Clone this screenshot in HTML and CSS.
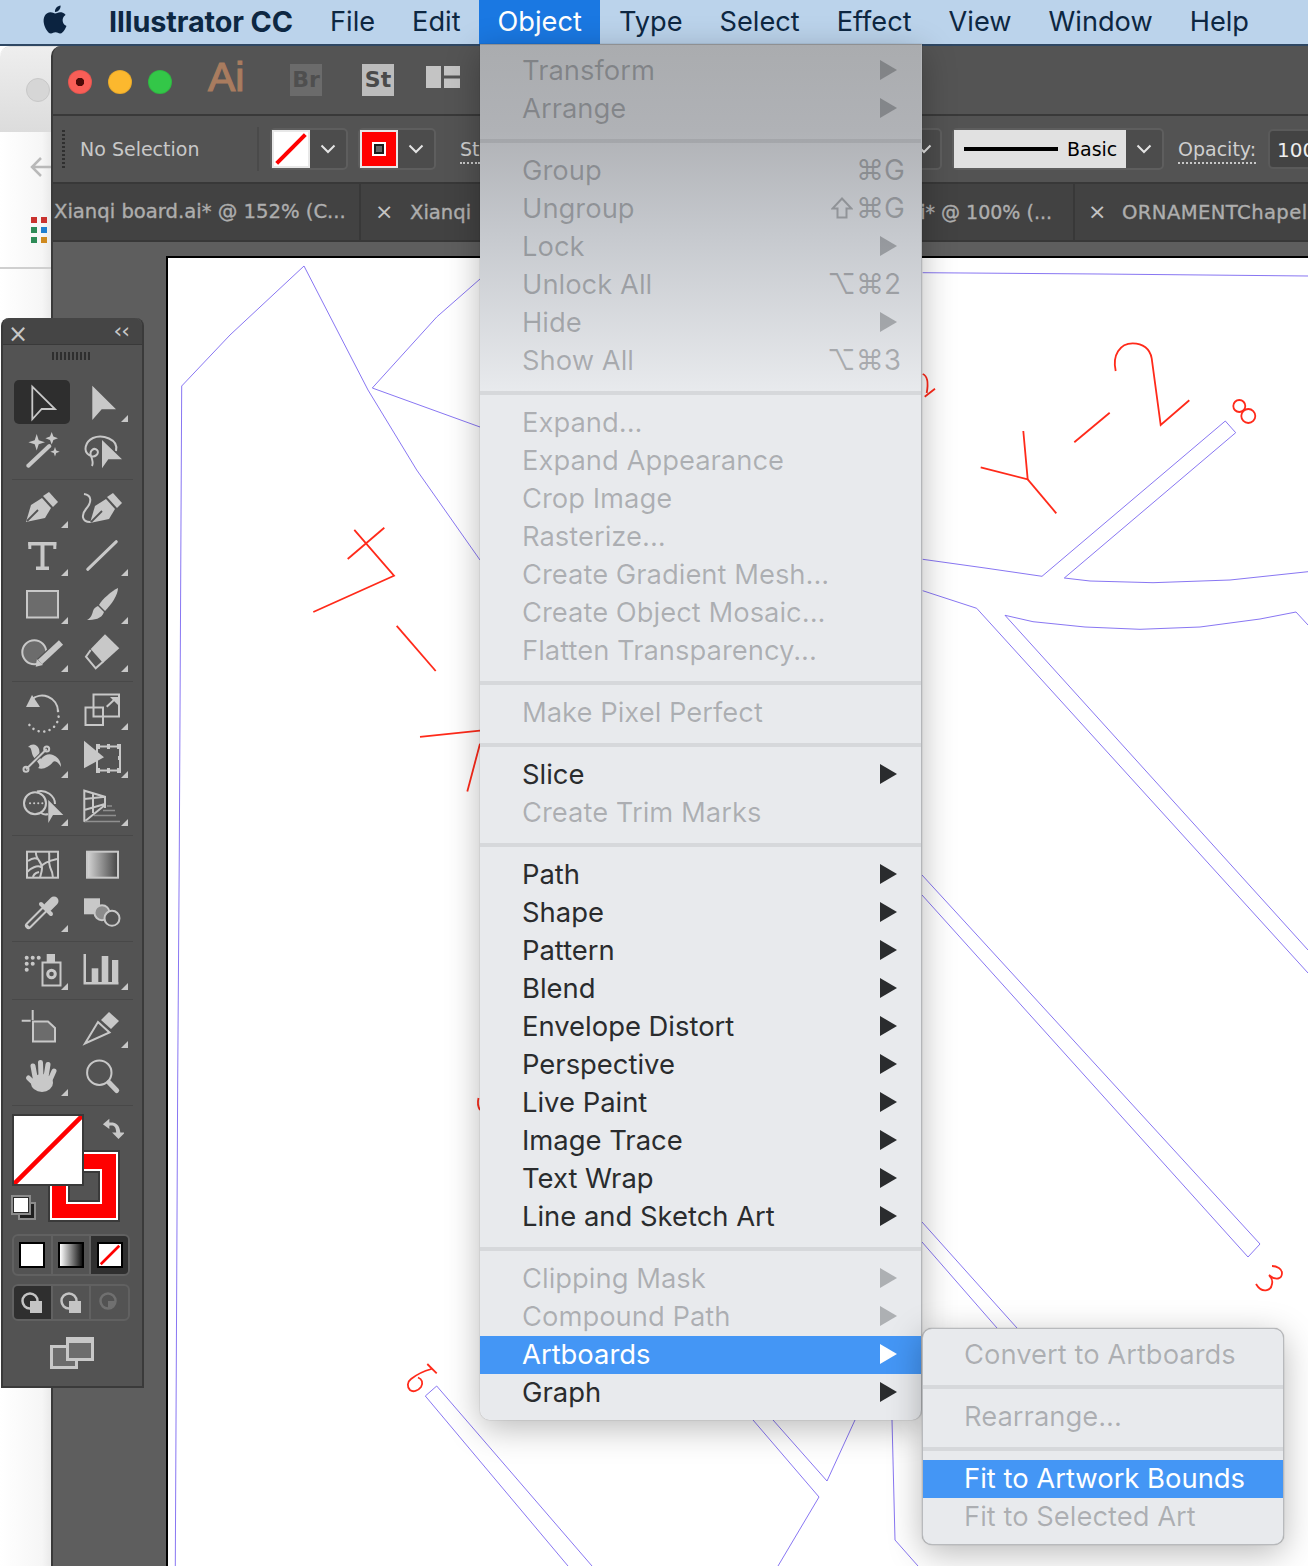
FILE: index.html
```html
<!DOCTYPE html>
<html lang="en">
<head>
<meta charset="utf-8">
<title>Illustrator CC - Object menu</title>
<link rel="stylesheet" href="styles.css">
</head>
<body>
<svg class="defs" aria-hidden="true"><symbol id="chev" viewBox="0 0 16 10"><polyline points="1.5,1.5 8,8 14.5,1.5" fill="none" stroke="#e4e4e4" stroke-width="2"/></symbol><symbol id="slash" viewBox="0 0 38 38"><rect width="38" height="38" fill="#fff"/><line x1="3" y1="35" x2="35" y2="3" stroke="#f00" stroke-width="4.5"/></symbol></svg>
<div class="desktop">

  <header class="menubar">
    <svg class="apple" viewBox="0 0 24 24"><path d="M12.152 6.896c-.948 0-2.415-1.078-3.96-1.04-2.04.027-3.91 1.183-4.961 3.014-2.117 3.675-.546 9.103 1.519 12.09 1.013 1.454 2.208 3.09 3.792 3.039 1.52-.065 2.09-.987 3.935-.987 1.831 0 2.35.987 3.96.948 1.637-.026 2.676-1.48 3.676-2.948 1.156-1.688 1.636-3.325 1.662-3.415-.039-.013-3.182-1.221-3.22-4.857-.026-3.04 2.48-4.494 2.597-4.559-1.429-2.09-3.623-2.324-4.39-2.376-2-.156-3.675 1.09-4.61 1.09zM15.53 3.83c.843-1.012 1.4-2.427 1.245-3.83-1.207.052-2.662.805-3.532 1.818-.78.896-1.454 2.338-1.273 3.714 1.338.104 2.715-.688 3.559-1.701"/></svg>
    <span class="mb-item mb-app">Illustrator CC</span>
    <span class="mb-item">File</span>
    <span class="mb-item">Edit</span>
    <span class="mb-item mb-active">Object</span>
    <span class="mb-item">Type</span>
    <span class="mb-item">Select</span>
    <span class="mb-item">Effect</span>
    <span class="mb-item">View</span>
    <span class="mb-item">Window</span>
    <span class="mb-item">Help</span>
  </header>

  <aside class="browser">
    <div class="browser-head"><span class="browser-dot"></span></div>
    <svg class="browser-back" viewBox="0 0 24 24"><path d="M22 12H3M12 3l-9 9 9 9" fill="none" stroke="#b9b9b9" stroke-width="2.5"/></svg>
    <div class="browser-apps">
      <i class="app-red"></i><i class="app-red"></i>
      <i class="app-green"></i><i class="app-blue"></i>
      <i class="app-green"></i><i class="app-orange"></i>
    </div>
    <div class="browser-rule"></div>
  </aside>

  <main class="window">
    <div class="titlebar">
      <span class="light light-red"></span>
      <span class="light light-yellow"></span>
      <span class="light light-green"></span>
      <span class="ai-logo">Ai</span>
      <span class="app-box box-br">Br</span>
      <span class="app-box box-st">St</span>
      <svg class="layout-icon" viewBox="0 0 34 22"><path d="M0 0h15v22H0zM18 0h16v9.5H18zM18 12.5h16V22H18z" fill="#c4c4c4"/></svg>
    </div>

    <div class="controlbar">
      <span class="grip"></span>
      <span class="no-sel">No Selection</span>
      <span class="ctl-div"></span>
      <div class="combo combo-fill">
        <svg class="swatch"><use href="#slash"/></svg>
        <span class="combo-chev"><svg class="chev"><use href="#chev"/></svg></span>
      </div>
      <div class="combo combo-stroke">
        <span class="swatch-stroke"><span class="swatch-stroke-in"></span></span>
        <span class="combo-chev"><svg class="chev"><use href="#chev"/></svg></span>
      </div>
      <span class="ctl-st"><span class="dotted">St</span></span>
      <div class="combo combo-ghost"><span class="combo-chev"><svg class="chev"><use href="#chev"/></svg></span></div>
      <div class="combo combo-style">
        <span class="style-swatch"><span class="style-line"></span><span class="style-name">Basic</span></span>
        <span class="combo-chev"><svg class="chev"><use href="#chev"/></svg></span>
      </div>
      <span class="opacity-label"><span class="dotted">Opacity:</span></span>
      <span class="opacity-input">100</span>
    </div>

    <div class="tabs">
      <div class="tab tab-1">Xianqi board.ai* @ 152% (C...</div>
      <div class="tab tab-2"><span class="tab-x">×</span>Xianqi</div>
      <div class="tab tab-3">i* @ 100% (...</div>
      <div class="tab tab-4"><span class="tab-x">×</span>ORNAMENTChapel</div>
    </div>

    <div class="canvas">
      <div class="artboard">
        <svg class="art" viewBox="168 258 1140 1308" width="1140" height="1308">
          <g class="art-blue">
            <polyline points="175.3,1566 177.7,1080 179.3,850 181.7,386 230,335 304,266 368,390 416.7,470 480,560"/>
            <polyline points="480,279 436.7,317 372.3,388 480,427"/>
            <polyline points="922.7,272.7 1100,274 1308,276"/>
            <polyline points="922.7,559.3 985,568 1042,576.3 1225.3,421 1235.7,432.7 1064.3,578 1090,581 1153,582.7 1230,580 1308,571.7"/>
            <polyline points="922.7,590.7 976.7,608.3 1308,973"/>
            <polyline points="1308,950 1005,615.3 1033,621.7 1085,627 1140,629.3 1200,627 1260,619 1296,612 1308,625"/>
            <polyline points="922,875 1260,1244 1248,1257 922,895"/>
            <polyline points="922,1222 1017,1328"/>
            <polyline points="922,1242 997,1328"/>
            <polyline points="592,1566 436.7,1386 425.3,1396 568,1566"/>
            <polyline points="753,1420 819,1497 778,1566"/>
            <polyline points="773,1420 827,1481 855,1420"/>
            <polyline points="892,1420 895,1540 918,1566"/>
          </g>
          <g class="art-red">
            <polyline points="354.3,529.8 394,575.7 313.3,612"/>
            <line x1="384.3" y1="527.8" x2="347.7" y2="559"/>
            <line x1="396.7" y1="625.8" x2="435.7" y2="671"/>
            <line x1="420" y1="736.8" x2="480" y2="730.7"/>
            <line x1="480" y1="743.7" x2="467.3" y2="791.5"/>
            <path d="M478.5 1098c-1 4-1 8 1.500 12"/>
            <path d="M922.700 374c5 2 6 8 4 19M924.700 396.700l10.300-8"/>
            <polyline points="1023.300,431 1027.700,479.300 980.700,467.300"/>
            <line x1="1027.700" y1="479.300" x2="1056.300" y2="513.300"/>
            <line x1="1074.300" y1="442.300" x2="1109.700" y2="412.700"/>
            <path d="M1115.700 371C1112 355 1120 343.300 1132.700 343.300 1143 343.300 1150 349 1151.700 358.300L1160.700 425 1189.300 400.300"/>
            <circle cx="1239.300" cy="406" r="6"/>
            <circle cx="1248.300" cy="416" r="7"/>
            <path d="M1256 1284C1262 1294 1271 1291 1272 1284 1273 1280 1271 1277 1269 1275 1276 1281 1282 1279 1282 1273 1282 1269 1277 1266 1272 1266"/>
            <path d="M427.300 1364l9.400 9.400M431.500 1369C424 1371 416 1375 411 1379 407 1382 407 1387 410 1390 413 1392.500 418 1391 421 1387 423.500 1383 422 1379 418 1377.500"/>
          </g>
        </svg>
      </div>
    </div>
  </main>

  <aside class="toolbox">
    <div class="tb-head"><span class="tb-x">×</span><span class="tb-collapse">‹‹</span></div>
    <div class="tb-grip"></div>

    <div class="tb-sec">
      <div class="tool sel"><svg viewBox="0 0 60 48"><path class="o" d="M20.300 7.700L43 30H29.700L20.300 40.300z"/></svg></div>
      <div class="tool more"><svg viewBox="0 0 60 48"><path d="M20.300 6.700L44 30.300H29.700L20.300 41z"/></svg></div>
      <div class="tool"><svg viewBox="0 0 60 48"><line class="l4" x1="16.300" y1="38.700" x2="37.300" y2="19"/><path d="M24.700 7l2 6.300 6.300 2-6.300 2-2 6.300-2-6.300-6.300-2 6.300-2zM39.700 5l1.700 4.600 4.600 1.700-4.600 1.700-1.700 4.600-1.700-4.600-4.600-1.700 4.600-1.700zM43 20l1.200 3.500 3.500 1.200-3.500 1.200-1.200 3.500-1.200-3.500-3.500-1.200 3.500-1.200z"/></svg></div>
      <div class="tool"><svg viewBox="0 0 60 48"><path class="s" d="M44 24C47 12 30 7 21 11 13 15 11 24 17 28 23 32 28 26 25 23 22 20 17 24 19 29 21 34 21 37 20 39"/><path d="M30 13L50 32.300H36.300L30 41.300z"/></svg></div>
    </div>
    <div class="tb-rule"></div>
    <div class="tb-sec">
      <div class="tool more"><svg viewBox="0 0 60 48"><path d="M14 37L19 20 30 13 39 23 33 33z"/><path d="M31 11L37 7 46 17 41 22z"/><line x1="15" y1="36" x2="26" y2="25" stroke="#535353" stroke-width="1.800"/></svg></div>
      <div class="tool"><svg viewBox="0 0 60 48"><path d="M18 38L23 21 34 14 43 24 37 34z"/><path d="M35 12L41 8 50 18 45 23z"/><line x1="19" y1="37" x2="30" y2="26" stroke="#535353" stroke-width="1.800"/><path class="s" d="M12 9C20 10 20 17 14 24 9 30 10 37 18 37"/></svg></div>
      <div class="tool more"><svg viewBox="0 0 60 48"><rect x="16.300" y="9" width="28" height="3.500"/><rect x="16.300" y="9" width="3" height="7"/><rect x="41.300" y="9" width="3" height="7"/><rect x="28.500" y="10" width="4" height="26"/><rect x="24" y="33.500" width="13" height="3.500"/></svg></div>
      <div class="tool more"><svg viewBox="0 0 60 48"><line class="l3" x1="15.700" y1="36.300" x2="44.300" y2="8.700"/></svg></div>
      <div class="tool more"><svg viewBox="0 0 60 48"><rect class="g" x="15" y="10" width="31" height="26.500"/></svg></div>
      <div class="tool more"><svg viewBox="0 0 60 48"><path d="M46 7C40 10 30 18 27 24L33 30C39 24 46 14 46 7z"/><path d="M26 25L32 31C30 38 22 39 15 39 19 37 20 34 21 30 22 27 24 26 26 25z"/></svg></div>
      <div class="tool more"><svg viewBox="0 0 60 48"><circle class="g" cx="22.300" cy="23.300" r="12"/><line x1="27" y1="35" x2="50" y2="13.500" stroke="#535353" stroke-width="10"/><line class="l6" x1="28" y1="33" x2="49" y2="13.500"/><path d="M23.700 37.700L24.800 30 31 36z"/></svg></div>
      <div class="tool more"><svg viewBox="0 0 60 48"><path d="M33 5.300L47.300 19.300 31 34 18.700 20z"/><path class="s" d="M18.700 21L14 27.700 23.700 39.300 31 32.700"/></svg></div>
    </div>
    <div class="tb-rule"></div>
    <div class="tb-sec">
      <div class="tool more"><svg viewBox="0 0 60 48"><path class="s" d="M19 13A16 16 0 0 1 46 24"/><path class="dots" d="M46 24A16 16 0 0 1 15 33"/><path d="M20 8L14 20H28z"/></svg></div>
      <div class="tool more"><svg viewBox="0 0 60 48"><rect class="s" x="21.500" y="7.500" width="25.500" height="22"/><rect class="s" x="13.500" y="20.500" width="17.500" height="17.500"/><line class="l2" x1="34.700" y1="19.700" x2="43" y2="12"/><path d="M38 10h8v8z"/></svg></div>
      <div class="tool more"><svg viewBox="0 0 60 48"><path d="M16 12C20 8 25 9 27 14 28 18 27 22 29 24 32 20 37 18 41 20 46 22 49 26 49 32 46 27 43 25 41 27 37 32 31 35 26 33 30 30 24 26 21 21 19 17 20 12 16 12z"/><line x1="14" y1="34.300" x2="34.700" y2="14" stroke="#535353" stroke-width="4"/><line class="l2" x1="14" y1="34.300" x2="34.700" y2="14"/><circle class="s" cx="14" cy="34.300" r="2.500"/><circle class="s" cx="34.700" cy="14" r="2.500"/></svg></div>
      <div class="tool more"><svg viewBox="0 0 60 48"><rect class="s" x="25" y="11.500" width="23" height="24"/><path d="M24 9h4v5h-4zM45 9h4v5h-4zM24 33h4v5h-4zM45 33h4v5h-4zM35 9h3v5h-3zM35 33h3v5h-3zM46 21h3v4h-3z"/><path d="M12 5.700L32 22.300 12 33.300z"/></svg></div>
      <div class="tool more"><svg viewBox="0 0 60 48"><circle class="s" cx="23" cy="20.300" r="11"/><path class="s" d="M25 8.500C34 6 43 13 43 21M29 30C32 32 34 32 36 31"/><path class="dots2" d="M18 20.300H32"/><path d="M36.300 17L51.300 32H41L36.300 40z"/></svg></div>
      <div class="tool more"><svg viewBox="0 0 60 48"><path class="s" d="M12.300 38.700V7.700L33 13.700V25M12.300 38.700L33 22M12.300 16L33 13.700M12.300 27L33 21M21 10.500V30"/><path class="fade" d="M35 23h5M31 27.500h12M22 32.500h22M13 38.500h35"/></svg></div>
    </div>
    <div class="tb-rule"></div>
    <div class="tb-sec">
      <div class="tool"><svg viewBox="0 0 60 48"><rect class="s" x="15" y="10.700" width="31" height="26"/><path class="s" d="M24 11C23 18 30 20 30 27 30 32 28 35 28 37M45 18C36 20 31 22 29 26 25 24 19 27 15 31M37 11C38 18 36 20 38 26 40 30 41 34 41 37M16 20C20 17 24 17 26 18M21 37C21 34 23 32 27 31"/></svg></div>
      <div class="tool"><svg viewBox="0 0 60 48"><defs><linearGradient id="gradTool"><stop offset="0" stop-color="#d6d6d6"/><stop offset="1" stop-color="#444"/></linearGradient></defs><rect x="15" y="10.700" width="31" height="26" fill="url(#gradTool)" stroke="#c8c8c8" stroke-width="2"/></svg></div>
      <div class="tool more"><svg viewBox="0 0 60 48"><line class="l8" x1="36" y1="18" x2="42" y2="12"/><line class="l4" x1="29" y1="15" x2="39" y2="25"/><line class="l7" x1="16.500" y1="36.500" x2="32" y2="21"/><line x1="16.500" y1="36.500" x2="32" y2="21" stroke="#535353" stroke-width="3"/></svg></div>
      <div class="tool"><svg viewBox="0 0 60 48"><rect x="12" y="9.300" width="16" height="16"/><circle cx="30" cy="23.700" r="7.500" fill="#8c8c8c" stroke="#c8c8c8" stroke-width="2"/><circle cx="40" cy="29.300" r="7.500" fill="#535353" stroke="#c8c8c8" stroke-width="2"/></svg></div>
    </div>
    <div class="tb-rule"></div>
    <div class="tb-sec">
      <div class="tool more"><svg viewBox="0 0 60 48"><circle cx="14.700" cy="10.700" r="2"/><circle cx="20.700" cy="10.700" r="2"/><circle cx="26.700" cy="10.700" r="2"/><circle cx="14.700" cy="16.700" r="2"/><circle cx="20.700" cy="16.700" r="2"/><circle cx="14.700" cy="22.700" r="2"/><rect x="34.700" y="7" width="8.300" height="8"/><rect class="s" x="30.500" y="15.500" width="18" height="23"/><circle class="s3" cx="39.500" cy="27" r="3.800"/></svg></div>
      <div class="tool more"><svg viewBox="0 0 60 48"><path d="M11.500 7h2.500v28h32.500v2.500h-35z"/><rect x="19.700" y="21.300" width="6.600" height="14"/><rect x="29.700" y="9" width="6.600" height="26"/><rect x="40" y="13" width="6.300" height="22"/></svg></div>
    </div>
    <div class="tb-rule"></div>
    <div class="tb-sec">
      <div class="tool"><svg viewBox="0 0 60 48"><path class="s" d="M20.700 5V15M9.700 15.700H18.700"/><path class="g" d="M21 16.500H36L43 23V36.500H21z"/></svg></div>
      <div class="tool more"><svg viewBox="0 0 60 48"><path class="s" d="M13 38.500L26 17 37.500 27.500z"/><path d="M29 15L37 7 47 16 39 24z"/></svg></div>
      <div class="tool more"><svg viewBox="0 0 60 48"><ellipse cx="30" cy="30" rx="11" ry="9"/><path class="l5" d="M25 33L16.500 25M23 24L21 13M29 24L28.500 9.500M34 24L36 11.500M38 27L42 18"/></svg></div>
      <div class="tool"><svg viewBox="0 0 60 48"><circle class="s" cx="27.300" cy="19.700" r="12.200"/><line class="l5" x1="37" y1="29.500" x2="44.700" y2="37.500"/></svg></div>
    </div>
    <div class="tb-rule"></div>

    <div class="tb-colors">
      <svg class="tb-fill" viewBox="0 0 68 68"><rect width="68" height="68" fill="#fff"/><line x1="0" y1="68" x2="68" y2="0" stroke="#f00" stroke-width="4.500"/></svg>
      <span class="tb-stroke"><span class="tb-stroke-in"></span></span>
      <svg class="tb-swap" viewBox="0 0 24 24"><path d="M9 2L2 8l7 5V9.500C14 9 16 10 16.500 17H21C20 8 16 5.500 9 6z M12 17h14l-7 7z" fill="#c8c8c8" transform="translate(-1,0)"/></svg>
      <span class="tb-def-back"></span><span class="tb-def-front"></span>
    </div>

    <div class="tb-mode tb-mode-1">
      <span class="mode"><span class="mode-swatch ms-white"></span></span>
      <span class="mode"><span class="mode-swatch ms-grad"></span></span>
      <span class="mode mode-on"><svg class="mode-swatch"><use href="#slash" width="22" height="22"/></svg></span>
    </div>
    <div class="tb-mode tb-mode-2">
      <span class="mode mode-on"><svg viewBox="0 0 24 24" class="mode-ic"><circle cx="10" cy="10" r="7.500" fill="none" stroke="#c4c4c4" stroke-width="2.500"/><rect x="10" y="10" width="12" height="12" fill="#c4c4c4"/></svg></span>
      <span class="mode"><svg viewBox="0 0 24 24" class="mode-ic"><circle cx="10" cy="10" r="7.500" fill="none" stroke="#c4c4c4" stroke-width="2.500"/><rect x="10" y="10" width="12" height="12" fill="#c4c4c4"/></svg></span>
      <span class="mode"><svg viewBox="0 0 24 24" class="mode-ic"><circle cx="10" cy="10" r="7.500" fill="none" stroke="#707070" stroke-width="2.500"/><path d="M10 10h7.500A7.500 7.500 0 0 1 10 17.500z" fill="#707070"/></svg></span>
    </div>
    <svg class="tb-screen" viewBox="0 0 44 32"><rect x="1.500" y="9.500" width="25" height="21" fill="#6c6c6c" stroke="#c8c8c8" stroke-width="3"/><rect x="17.500" y="1.500" width="25" height="21" fill="#6c6c6c" stroke="#c8c8c8" stroke-width="3"/><rect x="16" y="0" width="28" height="6" fill="#c8c8c8"/></svg>
  </aside>

  <nav class="menu menu-object">
    <div class="m dis"><span>Transform</span><i class="arrow"></i></div>
    <div class="m dis"><span>Arrange</span><i class="arrow"></i></div>
    <div class="m-sep"></div>
    <div class="m dis"><span>Group</span><b class="sc sc-g">⌘G</b></div>
    <div class="m dis"><span>Ungroup</span><b class="sc sc-g"><svg class="shift" viewBox="0 0 22 22"><path d="M11 1.500L20.500 11.500H15.500V20.500H6.500V11.500H1.500z"/></svg>⌘G</b></div>
    <div class="m dis"><span>Lock</span><i class="arrow"></i></div>
    <div class="m dis"><span>Unlock All</span><b class="sc">⌥⌘2</b></div>
    <div class="m dis"><span>Hide</span><i class="arrow"></i></div>
    <div class="m dis"><span>Show All</span><b class="sc">⌥⌘3</b></div>
    <div class="m-sep"></div>
    <div class="m dis"><span>Expand...</span></div>
    <div class="m dis"><span>Expand Appearance</span></div>
    <div class="m dis"><span>Crop Image</span></div>
    <div class="m dis"><span>Rasterize...</span></div>
    <div class="m dis"><span>Create Gradient Mesh...</span></div>
    <div class="m dis"><span>Create Object Mosaic...</span></div>
    <div class="m dis"><span>Flatten Transparency...</span></div>
    <div class="m-sep"></div>
    <div class="m dis"><span>Make Pixel Perfect</span></div>
    <div class="m-sep"></div>
    <div class="m"><span>Slice</span><i class="arrow"></i></div>
    <div class="m dis"><span>Create Trim Marks</span></div>
    <div class="m-sep"></div>
    <div class="m"><span>Path</span><i class="arrow"></i></div>
    <div class="m"><span>Shape</span><i class="arrow"></i></div>
    <div class="m"><span>Pattern</span><i class="arrow"></i></div>
    <div class="m"><span>Blend</span><i class="arrow"></i></div>
    <div class="m"><span>Envelope Distort</span><i class="arrow"></i></div>
    <div class="m"><span>Perspective</span><i class="arrow"></i></div>
    <div class="m"><span>Live Paint</span><i class="arrow"></i></div>
    <div class="m"><span>Image Trace</span><i class="arrow"></i></div>
    <div class="m"><span>Text Wrap</span><i class="arrow"></i></div>
    <div class="m"><span>Line and Sketch Art</span><i class="arrow"></i></div>
    <div class="m-sep"></div>
    <div class="m dis"><span>Clipping Mask</span><i class="arrow"></i></div>
    <div class="m dis"><span>Compound Path</span><i class="arrow"></i></div>
    <div class="m hi"><span>Artboards</span><i class="arrow"></i></div>
    <div class="m"><span>Graph</span><i class="arrow"></i></div>
  </nav>

  <nav class="menu menu-sub">
    <div class="m dis"><span>Convert to Artboards</span></div>
    <div class="m-sep"></div>
    <div class="m dis"><span>Rearrange...</span></div>
    <div class="m-sep"></div>
    <div class="m hi"><span>Fit to Artwork Bounds</span></div>
    <div class="m dis"><span>Fit to Selected Art</span></div>
  </nav>
</div>
</body>
</html>
```

FILE: styles.css
```css
* { box-sizing: border-box; }
html, body { margin: 0; padding: 0; }
body { background: #fff; font-family: "Inter", "Liberation Sans", sans-serif; }
.defs { display: none; }
.desktop { position: relative; width: 1308px; height: 1566px; overflow: hidden; background: #fff; }

/* menu bar */
.menubar { position: absolute; top: 0; left: 0; right: 0; height: 46px; z-index: 5; display: flex; align-items: stretch; padding-left: 41px; background: #bbd3eb; border-bottom: 2px solid #2e4763; color: #0d2742; font-size: 27.200px; }
.apple { width: 28px; height: 33px; margin: 3px 0 0; fill: #0b2340; flex: none; }
.mb-item { display: flex; align-items: center; padding: 0 18.500px; line-height: 44px; white-space: nowrap; flex: none; }
.mb-app { font-weight: 700; font-size: 28.800px; margin-left: 22px; padding-left: 18px; letter-spacing: -.1px; }
.mb-active { background: #1a78e2; color: #fff; }

/* browser behind */
.browser { position: absolute; left: 0; top: 46px; width: 70px; height: 1520px; background: linear-gradient(90deg, #fff 0, #f6f6f6 60%, #d0d0d0 100%); border-top-left-radius: 10px; border-top: 1px solid #ddd; }
.browser-head { height: 85px; background: linear-gradient(#eee, #dcdcdc); display: flex; align-items: center; border-top-left-radius: 10px; padding-left: 26px; }
.browser-dot { width: 24px; height: 24px; border-radius: 50%; background: #d6d6d6; border: 1px solid #c8c8c8; }
.browser-back { display: block; width: 24px; height: 24px; margin: 23px 0 0 29px; }
.browser-apps { display: grid; grid-template-columns: 6px 6px; gap: 4px; margin: 38px 0 0 31px; }
.browser-apps i { display: block; width: 6px; height: 6px; }
.app-red { background: #c9322e; }
.app-green { background: #2e8b57; }
.app-blue { background: #1e7fd0; }
.app-orange { background: #cf8a1f; }
.browser-rule { height: 2px; margin-top: 24px; background: #cfcfcf; }

/* app window */
.window { position: absolute; left: 51px; top: 46px; width: 1280px; height: 1520px; display: flex; flex-direction: column; background: #5e5e5e; border-left: 2px solid #3a3a3a; border-top-left-radius: 10px; overflow: hidden; }
.titlebar { height: 70px; flex: none; display: flex; align-items: center; padding-left: 15px; background: #545454; border-bottom: 2px solid #393939; }
.light { width: 24px; height: 24px; border-radius: 50%; margin: 3px 16px 0 0; border: 1px solid rgba(0,0,0,.08); flex: none; }
.light-red { background: radial-gradient(circle, #4d0a08 0 4px, #f95e57 4.500px); }
.light-yellow { background: #fcb82e; }
.light-green { background: #33c748; margin-right: 0; }
.ai-logo { margin: -6px 0 0 36px; font: 400 41px/1 "Liberation Sans", sans-serif; color: #a97c5f; -webkit-text-stroke: 1.200px #a97c5f; width: 36px; }
.app-box { width: 32px; height: 32px; display: flex; align-items: center; justify-content: center; font: 700 22px/1 "DejaVu Sans", sans-serif; flex: none; }
.box-br { margin-left: 46px; background: #6b6b6b; color: #4f4f4f; }
.box-st { margin-left: 40px; background: #bcbcbc; color: #4a4a4a; }
.layout-icon { width: 34px; height: 22px; margin-left: 32px; margin-top: -6px; flex: none; }

.controlbar { height: 68px; flex: none; display: flex; align-items: center; padding-left: 9px; background: #535353; border-bottom: 2px solid #383838; color: #cfcfcf; font: 400 19px/1 "DejaVu Sans", sans-serif; white-space: nowrap; }
.controlbar > * { flex: none; }
.grip { width: 3px; height: 38px; background: repeating-linear-gradient(#2f2f2f 0 2px, transparent 2px 4px); }
.no-sel { width: 176px; margin-left: 15px; color: #c8c8c8; }
.ctl-div { width: 2px; height: 44px; background: #4a4a4a; margin-left: 1px; }
.combo { display: flex; height: 42px; border: 2px solid #5e5e5e; border-radius: 5px; background: #4c4c4c; flex: none; }
.combo-fill { width: 78px; margin-left: 11px; }
.combo-stroke { width: 78px; margin-left: 10px; }
.swatch { width: 38px; height: 38px; display: block; border: 2px solid #e8e8e8; flex: none; }
.combo-chev { flex: 1; display: flex; align-items: center; justify-content: center; }
.chev { width: 16px; height: 10px; }
.swatch-stroke { width: 38px; height: 38px; display: flex; align-items: center; justify-content: center; background: #f00; border: 2px solid #e8e8e8; flex: none; }
.swatch-stroke-in { width: 10px; height: 10px; background: #666; border: 2px solid #1d1d1d; outline: 2px solid #fff; outline-offset: 0; }
.ctl-st { width: 40px; margin-left: 24px; }
.dotted { border-bottom: 2px dotted #c8c8c8; padding-bottom: 2px; }
.combo-ghost { width: 37px; margin-left: 405px; }
.combo-style { width: 212px; margin-left: 10px; }
.style-swatch { width: 172px; display: flex; align-items: center; background: #e1e1e1; color: #000; padding-left: 10px; flex: none; }
.style-line { width: 94px; height: 4px; background: #000; margin-right: 9px; }
.style-name { font-size: 19px; }
.opacity-label { margin-left: 14px; width: 78px; }
.opacity-input { margin-left: 12px; width: 80px; height: 40px; padding: 9px 0 0 7px; background: #434343; border: 2px solid #5a5a5a; border-radius: 5px; color: #eee; font-size: 20px; }

.tabs { height: 58px; flex: none; display: flex; background: #424242; border-bottom: 2px solid #383838; color: #aeaeae; font: 400 19.600px/56px "DejaVu Sans", sans-serif; -webkit-text-stroke: .35px #aeaeae; white-space: nowrap; }
.tab { flex: none; height: 56px; overflow: hidden; border-right: 2px solid #383838; }
.tab-1 { width: 308px; padding-left: 1px; }
.tab-2 { width: 540px; padding-left: 14px; border-right: 0; }
.tab-3 { width: 174px; text-align: right; padding-right: 21px; font-size: 19px; }
.tab-4 { width: 400px; padding-left: 13px; border-right: 0; letter-spacing: .4px; }
.tab-x { display: inline-block; width: 35px; font-weight: 400; font-size: 22px; color: #c4c4c4; -webkit-text-stroke: 0; }
.tab-4 .tab-x { width: 34px; }

.canvas { flex: 1; padding: 14px 0 0 113px; background: #5e5e5e; }
.artboard { width: 1160px; height: 1320px; background: #fff; border-top: 2px solid #000; border-left: 2px solid #000; }
.art { display: block; }
.art-blue polyline { fill: none; stroke: #7a66f0; stroke-width: .9; }
.art-red * { fill: none; stroke: #ff2a1a; stroke-width: 1.800; }

/* tool panel */
.toolbox { position: absolute; left: 1px; top: 318px; width: 143px; height: 1070px; z-index: 3; background: #535353; border: 2px solid #3a3a3a; border-top: 0; border-top-left-radius: 8px; border-top-right-radius: 8px; color: #c8c8c8; }
.tb-head { height: 27px; display: flex; align-items: center; justify-content: space-between; padding: 0 13px 0 5px; background: #454545; border-bottom: 1px solid #393939; border-top-left-radius: 8px; border-top-right-radius: 8px; font: 400 24px/1 "DejaVu Sans", sans-serif; }
.tb-x { margin-top: 5px; }
.tb-collapse { font-size: 22px; letter-spacing: -1px; margin-top: 0; }
.tb-grip { width: 38px; height: 8px; margin: 7px 0 19px 49px; background: repeating-linear-gradient(90deg, #2e2e2e 0 2px, transparent 2px 4px); }
.tb-sec { display: grid; grid-template-columns: 60px 60px; grid-auto-rows: 48px; margin-left: 9px; }
.tb-rule { height: 1px; margin: 4px 9px 5px; background: #484848; }
.tool { position: relative; }
.tool svg { position: relative; display: block; width: 60px; height: 48px; fill: #c8c8c8; }
.sel::before { content: ""; position: absolute; left: 2px; top: 1px; right: 2px; bottom: 3px; background: #2e2e2e; border-radius: 5px; }
.more::after { content: ""; position: absolute; left: 49px; top: 36px; width: 7px; height: 7px; background: #c8c8c8; clip-path: polygon(100% 0, 100% 100%, 0 100%); }
.tool svg .o { fill: none; stroke: #c8c8c8; stroke-width: 1.800; }
.tool svg .s { fill: none; stroke: #c8c8c8; stroke-width: 2; }
.tool svg .s3 { fill: none; stroke: #c8c8c8; stroke-width: 3; }
.tool svg .g { fill: #6c6c6c; stroke: #c8c8c8; stroke-width: 2; }
.tool svg .l2 { stroke: #c8c8c8; stroke-width: 2; }
.tool svg .l3 { stroke: #c8c8c8; stroke-width: 3; stroke-linecap: round; }
.tool svg .l4 { stroke: #c8c8c8; stroke-width: 4; stroke-linecap: round; }
.tool svg .l5 { fill: none; stroke: #c8c8c8; stroke-width: 5; stroke-linecap: round; }
.tool svg .l6 { stroke: #c8c8c8; stroke-width: 6; }
.tool svg .l7 { stroke: #c8c8c8; stroke-width: 7; stroke-linecap: round; }
.tool svg .l8 { stroke: #c8c8c8; stroke-width: 9; stroke-linecap: round; }
.tool svg .dots { fill: none; stroke: #c8c8c8; stroke-width: 2.500; stroke-linecap: round; stroke-dasharray: .1 5.500; }
.tool svg .dots2 { fill: none; stroke: #c8c8c8; stroke-width: 2; stroke-linecap: round; stroke-dasharray: .1 4; }
.tool svg .fade { fill: none; stroke: #8f8f8f; stroke-width: 1.600; }

.tb-colors { position: relative; height: 128px; margin-top: -5px; }
.tb-fill { position: absolute; z-index: 2; left: 9px; top: 8px; width: 72px; height: 72px; border: 2px solid #3a3a3a; }
.tb-stroke { position: absolute; left: 47px; top: 46px; width: 68px; height: 68px; background: #f00; border: 2px solid #fff; outline: 2px solid #3a3a3a; }
.tb-stroke-in { position: absolute; left: 16px; top: 17px; width: 32px; height: 31px; background: #535353; border: 2px solid #3a3a3a; outline: 2px solid #fff; }
.tb-swap { position: absolute; left: 99px; top: 10px; width: 22px; height: 24px; }
.tb-def-back { position: absolute; left: 15px; top: 96px; width: 18px; height: 18px; background: #1f1f1f; border: 2px solid #8c8c8c; }
.tb-def-front { position: absolute; left: 9px; top: 90px; width: 18px; height: 18px; background: #fff; border: 2px solid #2c2c2c; outline: 2px solid #8c8c8c; outline-offset: -1px; }

.tb-mode { display: flex; width: 118px; margin-left: 9px; border: 2px solid #616161; border-radius: 6px; overflow: hidden; }
.tb-mode-1 { height: 42px; }
.tb-mode-2 { height: 37px; margin-top: 8px; }
.mode { flex: 1; display: flex; align-items: center; justify-content: center; border-left: 2px solid #616161; }
.mode:first-child { border-left: 0; }
.mode-on { background: #2f2f2f; }
.mode-swatch { display: block; width: 26px; height: 26px; border: 2px solid #000; background: #fff; }
.ms-grad { background: linear-gradient(90deg, #fff, #111); }
.mode-ic { width: 24px; height: 24px; }
.tb-screen { display: block; width: 44px; height: 32px; margin: 16px 0 0 47px; }

/* menus */
.menu { position: absolute; z-index: 6; color: #2a2c2e; font-size: 27.400px; box-shadow: 0 8px 34px rgba(0,0,0,.28), 0 0 1px rgba(0,0,0,.5); }
.menu-object { left: 480px; top: 44px; width: 442px; height: 1376px; padding: 7px 0 9px; border-radius: 0 0 10px 10px; background: linear-gradient(#aaacaf 0, #b0b2b6 86px, #c6c9ce 190px, #e8eaed 346px, #e8eaed 100%); border-right: 1px solid #b4b6b9; border-top: 1px solid #8f9092; }
.menu-sub { left: 922px; top: 1328px; width: 362px; height: 217px; padding: 7px 0 9px; border-radius: 10px; background: #e8eaed; border: 1px solid #b8babd; }
.m { height: 38px; display: flex; align-items: center; justify-content: space-between; padding: 0 24px 2px 42px; white-space: nowrap; line-height: 38px; }
.menu-sub .m { padding-left: 41px; }
.dis { color: rgba(21,24,28,.28); }
.hi { background: #4496f5; color: #fff; }
.m-sep { height: 4px; margin: 11px 0 9px; background: rgba(0,0,0,.075); }
.arrow { display: block; width: 17px; height: 20px; background: currentColor; clip-path: polygon(0 0, 100% 50%, 0 100%); }
.sc { display: flex; align-items: center; font: 400 28px/38px "Inter", "DejaVu Sans", sans-serif; }
.sc-g { margin-right: -8px; }
.sc:not(.sc-g) { margin-right: -4px; }
.shift { width: 22px; height: 22px; margin-right: 3px; fill: none; stroke: currentColor; stroke-width: 2; }
```
